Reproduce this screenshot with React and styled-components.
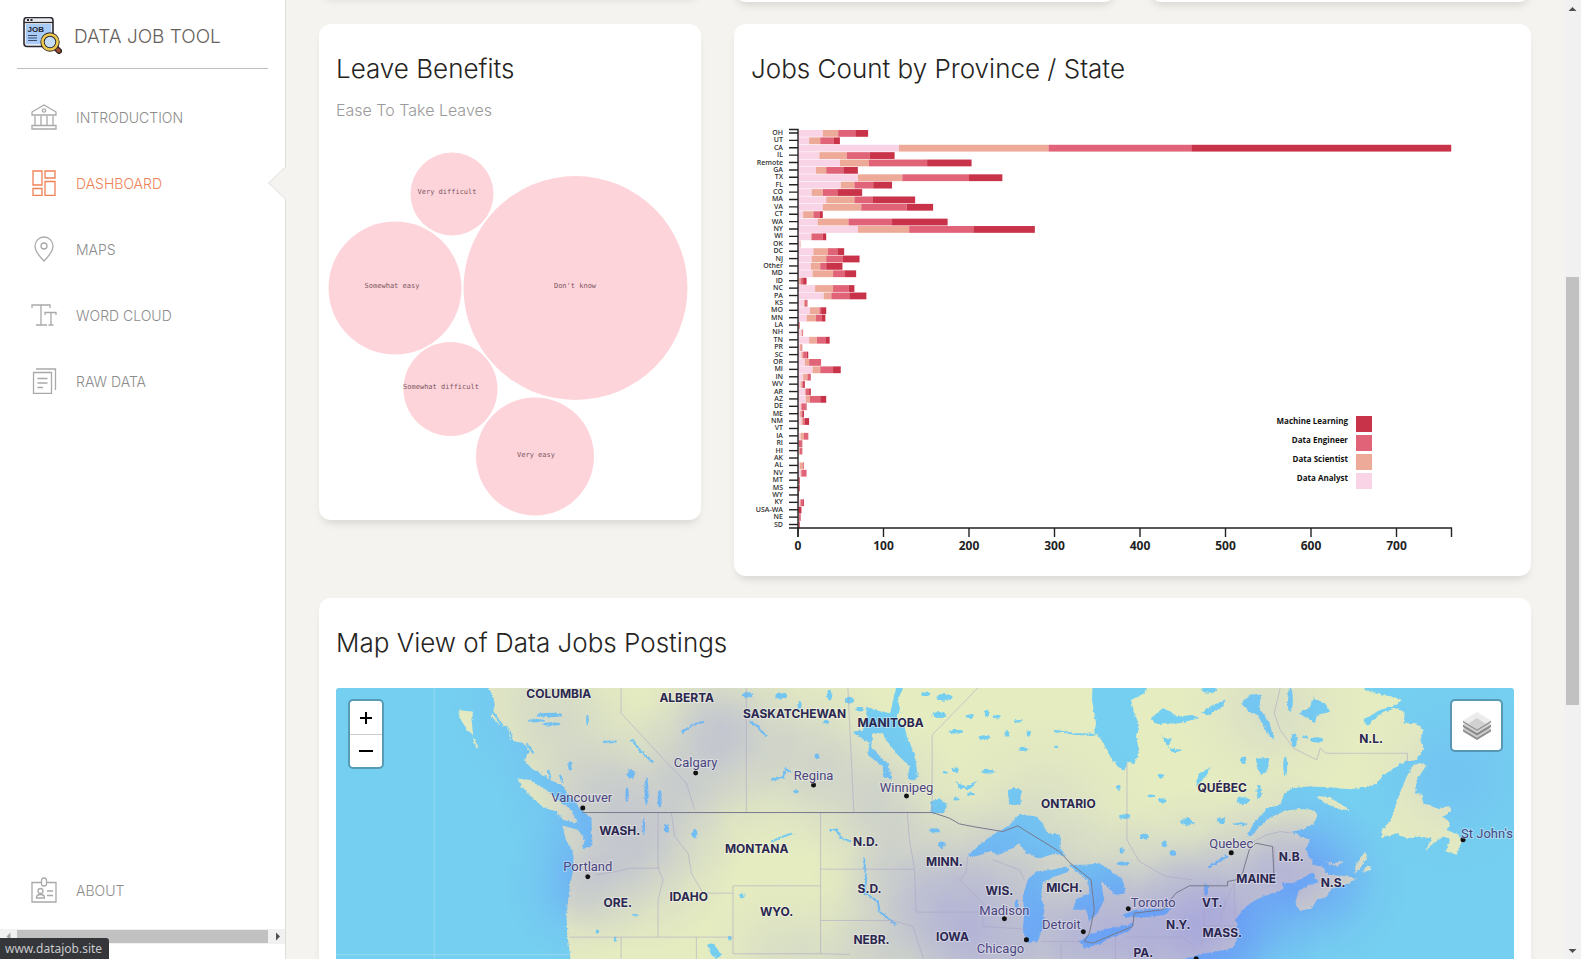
import React from "react";
import styled, { createGlobalStyle, css } from "styled-components";

const GlobalStyle = createGlobalStyle`
  *, *::before, *::after { box-sizing: border-box; }
  html, body { margin: 0; height: 100%; overflow: hidden; }
  body { background: #f4f3ef; font-family: Inter, "Open Sans", sans-serif; font-weight: 300; color: #252422; }
`;

/* ---------- layout ---------- */

const Page = styled.div`
  display: flex;
  height: 100vh;
  overflow: hidden;
`;

const Sidebar = styled.aside`
  flex: 0 0 286px;
  display: flex;
  flex-direction: column;
  background: #fff;
  border-right: 1px solid #ddd;
`;

const Brand = styled.a`
  display: flex;
  align-items: center;
  gap: 12px;
  height: 69px;
  margin: 0 17px;
  padding: 5px 5px 0;
  border-bottom: 1px solid #bdbdbd;
  color: #66615b;
  font-size: 19px;
  text-decoration: none;
`;

const Nav = styled.nav`
  display: flex;
  flex: 1;
  flex-direction: column;
  padding: 15px 0 6px;
`;

const NavLink = styled.a`
  position: relative;
  display: flex;
  align-items: center;
  gap: 19px;
  height: 66px;
  padding-left: 31px;
  color: ${(p) => (p.$active ? "#ef8157" : "#8c8c8c")};
  font-size: 14px;
  text-decoration: none;

  svg {
    width: 26px;
    height: 26px;
    fill: none;
    stroke: ${(p) => (p.$active ? "#ef8157" : "#a9a9a9")};
    stroke-width: 1.3;
  }

  ${(p) => p.$bottom && css`margin-top: auto;`}

  ${(p) =>
    p.$active &&
    css`
      &::after {
        content: "";
        position: absolute;
        top: 17px;
        right: -1px;
        width: 17px;
        height: 32px;
        background: #f4f3ef;
        clip-path: polygon(100% 0, 0 50%, 100% 100%);
      }
      &::before {
        content: "";
        position: absolute;
        top: 16px;
        right: -1px;
        width: 18px;
        height: 34px;
        background: #ddd;
        clip-path: polygon(100% 0, 0 50%, 100% 100%);
      }
    `}
`;

const SideScroll = styled.div`
  display: flex;
  align-items: center;
  height: 15px;
  margin-bottom: 15px;
  background: #f1f1f1;
`;

const ScrollThumb = styled.div`
  flex: ${(p) => p.$grow};
  align-self: stretch;
  margin: ${(p) => (p.$vertical ? "0 2px" : "1px 0")};
  background: #c1c1c1;
`;

const ScrollArrow = styled.svg`
  flex: 0 0 17px;
  width: 17px;
  height: 17px;
  fill: #505050;
`;

const Main = styled.main`
  flex: 1;
  min-width: 0;
  overflow: hidden;
`;

const Scrolled = styled.div`
  display: grid;
  grid-template-columns: repeat(3, 1fr);
  align-items: start;
  gap: 22px 33px;
  margin-top: -98px;
  padding: 0 33px 22px;
`;

const Card = styled.section`
  grid-column: span ${(p) => p.$span || 1};
  overflow: hidden;
  background: #fff;
  border-radius: 12px;
  box-shadow: 0 6px 10px -4px rgba(0, 0, 0, 0.15);
  ${(p) => p.$stub && css`height: ${p.$stub}px;`}
`;

const CardHead = styled.header`
  padding: 29px 17px ${(p) => (p.$tight ? "18px" : "29px")};
`;

const Title = styled.h2`
  margin: 0;
  font-size: 26px;
  line-height: 32px;
  font-weight: 300;
`;

const Subtitle = styled.p`
  margin: 13px 0 0;
  color: #9a9a9a;
  font-size: 16px;
  line-height: 24px;
`;

const Plot = styled.svg`
  display: block;
  width: 100%;
`;

const PageScroll = styled.div`
  flex: 0 0 17px;
  display: flex;
  flex-direction: column;
  background: #f1f1f1;
`;

const ScrollGap = styled.div`
  flex: ${(p) => p.$grow};
`;

const StatusTip = styled.div`
  position: fixed;
  left: 0;
  bottom: 0;
  padding: 0 7px 0 5px;
  border-top-right-radius: 3px;
  background: #35363a;
  color: #c8cacd;
  font: 400 12px/21px "Noto Sans", sans-serif;
`;

/* ---------- icons ---------- */

const icons = {
  intro: (
    <>
      <path d="M1 11V8L13 1l12 7v3z" />
      <circle cx="13" cy="6.5" r="1.7" />
      <path d="M4 12v9M10 12v9M16 12v9M22 12v9M1 25v-3.5h24V25z" />
    </>
  ),
  dashboard: (
    <path d="M2 1h9v14H2zM14 1h10v7H14zM2 18.500h9V25.500H2zM14 11.500h10v14H14z" />
  ),
  maps: (
    <>
      <path d="M13 25C7 19 4 14.500 4 10a9 9 0 0 1 18 0c0 4.500-3 9-9 15z" />
      <circle cx="13" cy="10" r="3" />
    </>
  ),
  words: (
    <path d="M1 6V3h18v3M10 3v20M5 23h11M14 13v-2.500h11V13M20 10.500V23M17.500 23h5" />
  ),
  raw: (
    <path d="M2.500 4.500h18v21h-18zM5 1h19.500v21M6.500 10.500h10M6.500 15h10M6.500 19.500h5.500" />
  ),
  about: (
    <>
      <path d="M10.500 5.500H1V25h24V5.500h-9.500" />
      <rect x="10.500" y="1" width="5" height="8" rx="2.300" />
      <circle cx="9.500" cy="14" r="2.500" />
      <path d="M5.500 21c0-3 2-3.500 4-3.500s4 .5 4 3.500zM16 14h6M16 18.500h6" />
    </>
  ),
};

const NavIcon = ({ name }) => (
  <svg viewBox="0 0 26 26" aria-hidden="true">
    {icons[name]}
  </svg>
);

const LogoSvg = styled.svg`
  width: 40px;
  height: 40px;
`;

const Logo = () => (
  <LogoSvg viewBox="0 1 40 40" aria-hidden="true">
    <rect x="2" y="1.500" width="29" height="29" rx="3" fill="#e9eaf0" stroke="#2b2a33" strokeWidth="1.600" />
    <path d="M2 6.500h29" stroke="#2b2a33" strokeWidth="1.200" />
    <path d="M5 4h2M8.500 4h2" stroke="#2b2a33" strokeWidth="2.200" />
    <rect x="4" y="8" width="25" height="20" fill="#a9cbf8" />
    <text x="5.500" y="16" fontFamily="Liberation Sans, sans-serif" fontWeight="700" fontSize="8" fill="#22222c">JOB</text>
    <path d="M6 19.500h9M6 22h9M6 24.500h9" stroke="#3b4b68" strokeWidth="1.200" />
    <path d="m33 31 4 4" stroke="#2b1d18" strokeWidth="6" strokeLinecap="round" />
    <path d="m33 31 4 4" stroke="#9b4f35" strokeWidth="3.400" strokeLinecap="round" />
    <circle cx="28" cy="26" r="7.500" fill="#c5dcf9" stroke="#2b2a33" strokeWidth="4.400" />
    <circle cx="28" cy="26" r="7.500" fill="none" stroke="#efc94c" strokeWidth="2.600" />
  </LogoSvg>
);

/* ---------- bubble chart ---------- */

const bubbles = [
  { label: "Very difficult", x: 133, y: 54, r: 41.5, tx: 128 },
  { label: "Don't know", x: 256.5, y: 148, r: 112, tx: 256 },
  { label: "Somewhat easy", x: 76, y: 148, r: 66.5, tx: 73 },
  { label: "Somewhat difficult", x: 131.5, y: 249, r: 47, tx: 122 },
  { label: "Very easy", x: 216, y: 316.5, r: 59, tx: 217 },
];

const BubbleText = styled.text`
  font: 400 7px "DejaVu Sans Mono", monospace;
  text-anchor: middle;
  fill: #7a5660;
`;

const BubbleChart = () => (
  <Plot viewBox="0 0 382 380" role="img" aria-label="Ease to take leaves">
    {bubbles.map((b) => (
      <g key={b.label}>
        <circle cx={b.x} cy={b.y} r={b.r} fill="#fed4db" />
        <BubbleText x={b.tx} y={b.y}>{b.label}</BubbleText>
      </g>
    ))}
  </Plot>
);

/* ---------- stacked bar chart ---------- */

/* cumulative totals: analyst, scientist, engineer, machine learning */
const states = [
  ["OH", 29, 47, 67, 82], ["UT", 13, 26, 42, 49], ["CA", 118, 293, 460, 764],
  ["IL", 25, 57, 84, 113], ["Remote", 49, 83, 151, 203], ["GA", 21, 33, 53, 70],
  ["TX", 70, 122, 200, 239], ["FL", 50, 66, 88, 110], ["CO", 16, 29, 46, 75],
  ["MA", 33, 66, 87, 137], ["VA", 29, 74, 127, 158], ["CT", 6, 18, 25, 29],
  ["WA", 23, 59, 110, 175], ["NY", 70, 130, 205, 277], ["WI", 15, 16, 29, 33],
  ["OK", 2, 3, 3, 3], ["DC", 18, 35, 46, 54], ["NJ", 16, 33, 52, 72],
  ["Other", 15, 26, 33, 52], ["MD", 17, 41, 55, 68], ["ID", 1, 3, 6, 10],
  ["NC", 20, 41, 59, 66], ["PA", 30, 39, 60, 80], ["KS", 7, 8, 10, 11],
  ["MO", 14, 25, 27, 33], ["MN", 10, 21, 28, 32], ["LA", 0, 1, 2, 2],
  ["NH", 4, 5, 6, 6], ["TN", 13, 22, 32, 37], ["PR", 2, 4, 5, 5],
  ["SC", 4, 6, 10, 12], ["OR", 8, 13, 27, 27], ["MI", 17, 26, 41, 50],
  ["IN", 6, 11, 15, 15], ["WV", 3, 5, 6, 8], ["AR", 8, 9, 13, 15],
  ["AZ", 9, 14, 26, 33], ["DE", 3, 4, 9, 10], ["ME", 2, 4, 5, 7],
  ["NM", 4, 6, 8, 13], ["VT", 0, 1, 1, 1], ["IA", 3, 7, 11, 12],
  ["RI", 1, 1, 4, 5], ["HI", 1, 2, 4, 5], ["AK", 0, 0, 0, 0],
  ["AL", 2, 6, 7, 7], ["NV", 3, 4, 10, 10], ["MT", 0, 1, 1, 2],
  ["MS", 0, 0, 1, 2], ["WY", 0, 0, 1, 1], ["KY", 2, 3, 6, 7],
  ["USA-WA", 0, 0, 1, 4], ["NE", 1, 1, 2, 3], ["SD", 0, 1, 1, 2],
];

const series = [
  { name: "Data Analyst", color: "#f9d4e6" },
  { name: "Data Scientist", color: "#eeaa99" },
  { name: "Data Engineer", color: "#e06377" },
  { name: "Machine Learning", color: "#c83349" },
];

const AxisLine = styled.path`
  fill: none;
  stroke: #222;
  stroke-width: 1.4;
`;

const StateText = styled.text`
  font: 600 7px "Open Sans", sans-serif;
  text-anchor: end;
  fill: #333;
`;

const TickText = styled.text`
  font: 700 12px "Noto Sans", sans-serif;
  text-anchor: middle;
  fill: #222;
`;

const LegendText = styled.text`
  font: 700 8px "Open Sans", sans-serif;
  text-anchor: end;
  fill: #111;
`;

const ORIGIN = 64;
const UNIT = 0.855;
const ROW = 7.387;
const FIRST = 21;

const BarChart = () => (
  <Plot viewBox="0 2 797 462" role="img" aria-label="Jobs count by province or state">
    {states.map(([name, ...totals], i) => {
      const cy = FIRST + i * ROW;
      return (
        <g key={name}>
          {totals.map((end, s) => {
            const start = s ? totals[s - 1] : 0;
            return (
              <rect key={s} x={ORIGIN + start * UNIT} y={cy - 3} width={(end - start) * UNIT} height={6.8} fill={series[s].color} />
            );
          })}
          <AxisLine d={`M${ORIGIN - 9} ${cy}h9`} />
          <StateText x={ORIGIN - 15} y={cy + 2}>{name}</StateText>
        </g>
      );
    })}
    <AxisLine d="M55 17.500h9V416h-9" />
    <AxisLine d="M64 425V416H717.500V425" />
    {[0, 100, 200, 300, 400, 500, 600, 700].map((v) => (
      <g key={v}>
        <AxisLine d={`M${ORIGIN + v * UNIT} 416v9`} />
        <TickText x={ORIGIN + v * UNIT} y={438}>{v}</TickText>
      </g>
    ))}
    {[...series].reverse().map((s, i) => (
      <g key={s.name}>
        <LegendText x={614} y={312 + i * 19}>{s.name}</LegendText>
        <rect x={622} y={304 + i * 19} width={16} height={16} fill={s.color} />
      </g>
    ))}
  </Plot>
);

/* ---------- map ---------- */

/* The outlines are kept at three units to a pixel, sheet by sheet from west to east. */
const sheet = (dx, points) =>
  points
    .split(" ")
    .map((p) => {
      const [x, y] = p.split(",").map(Number);
      return `${x + dx},${y}`;
    })
    .join(" ");
const W = 0;
const P = 960;
const L = 1890;
const E = 2763;

const mainland = [
  sheet(W, "470,10 490,50 495,75 485,110 510,135 535,140 540,180 580,190 600,215 582,240 605,265 640,285 680,310 700,320 715,345 735,365 748,385 765,398 785,415 788,500 758,505 765,480 745,450 698,437 708,480 730,515 733,560 720,620 710,700 712,760 722,837 722,1300"),
  sheet(L, "400,1300 520,960 600,860 720,824 820,806 842,760 828,720 860,680 910,648"),
  sheet(E, "0,668 40,650 100,628 95,608 130,610 165,590 195,572 185,540 165,510 180,480 150,470 125,455 160,450 190,430 203,405 190,390 150,387 110,392 60,412 30,437 5,468 -10,470 10,430 50,385 90,375 100,345 125,325 175,320 240,322 300,328 350,322 380,310 400,285 440,260 470,242 500,240 522,205 510,185 520,150 500,130 460,128 465,100 440,85 400,95 350,137 340,120 390,90 440,74 455,60 430,50 400,45 340,28 370,10"),
].join(" ");

const islands = [
  sheet(W, "562,295 600,300 650,330 690,365 722,387 745,430 700,420 680,395 640,382 600,345 575,320"),
  sheet(W, "385,90 432,95 425,120 430,165 412,150 390,115"),
  sheet(W, "428,170 436,178 446,205 436,198"),
  sheet(W, "500,75 508,90 500,115 490,100"),
  sheet(E, "190,556 215,560 235,585 300,590 318,600 280,618 245,625 230,650 200,660 185,685 150,693 135,668 145,635 175,615 205,608 190,580"),
  sheet(E, "510,250 530,255 510,285 500,300 495,340 515,345 520,370 560,385 600,378 605,395 580,410 600,430 590,450 625,465 635,485 620,525 588,515 600,480 580,470 550,490 525,515 545,475 500,470 470,475 440,460 392,475 395,450 420,425 430,400 445,350 470,290 490,255"),
  sheet(E, "198,348 240,352 300,390 265,388 225,370"),
  sheet(E, "225,545 250,550 283,543 260,559 235,553"),
  sheet(E, "345,515 350,535 330,565 312,584 318,555"),
  sheet(E, "335,580 350,556 367,567"),
];

const lakes = [
  sheet(L, "400,10 398,60 410,130 405,160 430,185 450,225 475,260 495,272 505,245 525,250 540,215 530,170 540,140 525,100 515,60 555,40 570,10"),
  sheet(L, "25,530 60,495 100,465 150,435 180,402 230,410 250,430 265,460 305,465 300,500 320,530 290,520 240,535 200,520 180,490 150,510 120,525 90,515"),
  sheet(L, "320,560 280,570 230,575 205,600 190,650 195,700 190,750 205,790 235,785 250,740 255,690 245,650 250,610 285,590 330,575"),
  sheet(L, "330,555 380,555 420,550 450,570 490,600 500,640 470,645 425,605 435,660 415,700 390,722 380,690 340,690 350,660 390,640 385,600 350,575"),
  sheet(L, "360,785 390,765 430,750 480,740 525,730 510,755 460,770 420,795 375,805"),
  sheet(L, "490,705 530,690 590,690 635,685 620,705 560,712 500,712"),
  sheet(L, "145,335 165,322 185,330 183,375 150,375"),
  sheet(P, "650,80 675,90 722,100 740,20 762,20 745,60 752,90 740,115 765,140 775,180 795,220 805,290 790,305 775,295 780,260 740,220 710,180 700,160 670,160 665,200 690,230 715,250 727,300 700,290 700,260 655,225 660,190 620,165 610,155 640,150 650,120"),
  sheet(P, "845,365 870,355 895,375 880,400 845,400"),
  sheet(P, "172,795 190,790 215,825 200,837 185,825"),
  sheet(P, "955,525 995,500 1010,520 975,530"),
  sheet(P, "920,305 950,320 985,300 960,328 930,325"),
  sheet(L, "575,115 610,85 635,95 650,110 700,105 720,115 660,130 590,132"),
  sheet(L, "725,100 760,75 800,60 790,80 750,105"),
  sheet(L, "845,70 880,40 905,45 900,85 930,125 945,180 925,160 895,105 870,95"),
  sheet(L, "605,165 620,175 638,175 625,205 672,210 640,220"),
  sheet(L, "710,320 720,280 755,262 740,290"),
  sheet(L, "890,235 930,235 925,275 905,285 895,265"),
  sheet(L, "660,425 685,410 705,430 680,438"),
  sheet(E, "145,100 180,80 190,55 225,70 240,95 200,105 195,130 165,110"),
  sheet(L, "745,560 800,525 805,532 750,566"),
];

/* x, y, rx, ry */
const ponds = [
  [P + 295, 45, 16, 8], [P + 395, 48, 18, 9], [P + 540, 45, 8, 16], [P + 600, 60, 14, 10], [P + 630, 88, 12, 8],
  [P + 885, 52, 24, 10], [P + 828, 42, 14, 6], [P + 870, 105, 22, 9], [P + 920, 155, 22, 6], [P + 962, 108, 10, 6],
  [P + 502, 229, 7, 8], [P + 440, 335, 8, 5], [P + 135, 462, 8, 14], [P + 50, 445, 8, 12], [P + 30, 355, 6, 28],
  [P + 855, 452, 16, 8], [P + 876, 495, 10, 10], [P + 918, 270, 10, 7], [P + 888, 277, 8, 4], [P + 277, 648, 8, 7],
  [P + 240, 775, 5, 7], [P + 965, 342, 12, 4], [P + 920, 357, 8, 5], [P + 450, 75, 6, 12], [P + 530, 125, 9, 5],
  [L + 30, 108, 12, 4], [L + 82, 100, 6, 10], [L + 112, 110, 12, 6], [L + 175, 124, 12, 4], [L + 75, 172, 18, 6],
  [L + 143, 162, 8, 8], [L + 208, 160, 6, 11], [L + 192, 208, 12, 5], [L + 290, 202, 6, 5], [L + 85, 275, 20, 6],
  [L + 605, 288, 10, 6], [L + 478, 322, 6, 8], [L + 610, 362, 12, 7], [L + 575, 348, 10, 4], [L + 495, 410, 18, 7],
  [L + 785, 422, 12, 9], [L + 555, 470, 14, 8], [L + 615, 492, 8, 10], [L + 642, 520, 9, 8], [L + 487, 512, 6, 10],
  [L + 490, 551, 18, 6], [L + 853, 240, 8, 12], [L + 740, 630, 6, 18], [L + 172, 672, 6, 14], [L + 850, 362, 20, 10],
  [L + 900, 335, 8, 20], [L + 845, 432, 24, 4], [L + 750, 30, 24, 8],
  [E + 105, 260, 6, 30], [E + 120, 60, 8, 36], [E + 132, 180, 8, 22], [E + 200, 180, 20, 8], [E + 165, 172, 8, 6],
  [W + 660, 105, 40, 7], [W + 620, 122, 26, 5], [W + 665, 132, 28, 5], [W + 840, 186, 22, 4], [W + 720, 258, 5, 14],
  [W + 904, 282, 12, 12], [W + 892, 345, 5, 24], [W + 950, 335, 6, 40], [W + 773, 120, 4, 16], [W + 918, 706, 9, 4],
  [W + 857, 778, 5, 8], [W + 802, 755, 6, 6], [W + 942, 438, 4, 26],
];

const rivers = [
  sheet(P, "643,533 650,600 645,640 685,665 690,695 740,735"),
  sheet(P, "365,300 400,292 408,268 422,275"),
  sheet(P, "365,485 400,470 430,460"),
  sheet(P, "540,450 560,450 575,475 605,485"),
  sheet(L, "285,152 350,162 405,165"),
  sheet(W, "905,178 935,215 970,248"),
  sheet(L, "525,695 610,690"),
  sheet(P, "95,158 130,134 160,126"),
  sheet(P, "300,125 325,140 350,170"),
  sheet(W, "485,90 505,120 520,145"),
  sheet(W, "540,150 548,190"),
  sheet(W, "590,190 612,222"),
  sheet(W, "655,268 662,295"),
  sheet(W, "690,285 700,312"),
];

const stateLines = [
  sheet(P, "290,24 290,398"), sheet(P, "595,24 613,398"), sheet(P, "848,398 848,165 985,24"),
  sheet(P, "25,398 25,565 40,600 25,660 25,772"), sheet(P, "65,398 75,470 115,520 125,580 160,640 250,640"),
  sheet(P, "250,618 513,618 513,822 250,822 250,618"), sheet(P, "513,398 513,618"), sheet(P, "513,568 795,568"),
  sheet(P, "513,722 730,722 790,740 822,837"), sheet(P, "773,398 780,480 795,568 800,697 1000,697"),
  sheet(P, "-240,772 250,772"), sheet(P, "140,772 140,1000"), sheet(W, "874,772 874,1000"),
  sheet(W, "800,585 860,575 900,565 990,565"), sheet(W, "874,24 874,100 930,160 990,225 1070,310 1095,390"),
  sheet(L, "503,250 503,480 540,545 620,590 700,600"), sheet(L, "25,530 20,580 0,600 40,640 70,670 70,740 200,748"),
  sheet(L, "100,540 180,570 195,600"), sheet(L, "245,785 360,785"), sheet(L, "305,790 305,1000"),
  sheet(L, "468,770 468,1000"), sheet(L, "495,772 670,772 705,800"), sheet(L, "735,618 735,765 725,800"),
  sheet(L, "825,610 800,660 780,735"), sheet(L, "825,610 828,730"), sheet(L, "735,738 828,738"),
  sheet(E, "228,220 472,220 472,250"), sheet(E, "90,24 72,100 90,150 130,205 200,240 210,205 228,220"),
  sheet(E, "0,490 50,465 90,455 125,460"), sheet(E, "72,500 72,605"), sheet(P, "513,822 600,824"),
];

const border = [
  sheet(P, "-202,398 850,398 900,415 930,432"),
  sheet(L, "0,432 40,440 130,455 175,438 300,515 335,552 395,600 405,690 390,760 375,785 400,790 520,740 525,700 610,690 650,640 690,618 805,618 805,605 830,600 850,580 870,510 890,490 940,500 945,600"),
].join(" ");

/* x, y, radius, opacity */
const heat = [
  [800, 330, 300, 0.4], [930, 520, 300, 0.45], [750, 620, 230, 0.4], [650, 80, 300, 0.25], [1170, 140, 260, 0.5],
  [1080, 320, 280, 0.35], [1430, 240, 300, 0.35], [1660, 370, 260, 0.35], [1850, 680, 340, 0.6], [1680, 600, 240, 0.25],
  [1940, 830, 320, 0.5], [2140, 430, 340, 0.2], [2330, 720, 340, 0.55], [2180, 800, 320, 0.45], [2600, 640, 320, 0.5],
  [2680, 760, 300, 0.65], [2870, 560, 280, 0.6], [2980, 610, 260, 0.4], [3370, 290, 300, 0.2], [1600, 840, 240, 0.3],
  [2830, 90, 280, 0.2], [1360, 820, 240, 0.2], [2480, 860, 340, 0.5], [2000, 550, 260, 0.25],
];

const regions = [
  ["COLUMBIA", 559, 694], ["ALBERTA", 687, 698], ["SASKATCHEWAN", 795, 714], ["MANITOBA", 891, 723],
  ["N.L.", 1372, 739], ["QUÉBEC", 1223, 788], ["ONTARIO", 1069, 804], ["WASH.", 620, 831], ["MONTANA", 757, 849],
  ["N.D.", 866, 842], ["MINN.", 945, 862], ["S.D.", 870, 889], ["IDAHO", 689, 897], ["ORE.", 618, 903],
  ["WYO.", 777, 912], ["NEBR.", 872, 940], ["IOWA", 953, 937], ["WIS.", 1000, 891], ["MICH.", 1065, 888],
  ["VT.", 1213, 903], ["N.Y.", 1179, 925], ["MASS.", 1223, 933], ["PA.", 1144, 953], ["MAINE", 1257, 879],
  ["N.B.", 1292, 857], ["N.S.", 1334, 883],
];

/* name, label x, label y, dot x, dot y */
const cities = [
  ["Vancouver", 582, 797, 583, 808], ["Portland", 588, 866, 588, 877], ["Calgary", 696, 762, 696, 773],
  ["Regina", 814, 775, 814, 785], ["Winnipeg", 907, 787, 907, 796], ["Madison", 1005, 910, 1005, 919],
  ["Detroit", 1062, 924, 1084, 932], ["Chicago", 1001, 948, 1027, 940], ["Toronto", 1154, 902, 1129, 909],
  ["Quebec", 1232, 843, 1232, 853], ["St John's", 1488, 833, 1464, 840],
];

const MapFrame = styled.div`
  position: relative;
  margin: 0 17px 17px;
  border-radius: 3px;
  overflow: hidden;
  background: #75cff0;
`;

const RegionText = styled.text`
  font: 700 12px Inter, sans-serif;
  text-anchor: middle;
  fill: #2b2750;
  stroke: rgba(255, 255, 255, 0.35);
  stroke-width: 2;
  paint-order: stroke;
`;

const CityText = styled(RegionText)`
  font: 400 13px Roboto, sans-serif;
  fill: #4b4580;
`;

const mapControl = css`
  position: absolute;
  top: 11px;
  border: 2px solid rgba(0, 0, 0, 0.25);
  border-radius: 5px;
  background: #fff;
  background-clip: padding-box;
`;

const ZoomBar = styled.div`
  ${mapControl}
  left: 12px;
  display: flex;
  flex-direction: column;
`;

const ZoomButton = styled.button`
  display: grid;
  place-items: center;
  width: 32px;
  height: 33px;
  padding: 0;
  border: 0;
  background: none;
  & + & {
    border-top: 1px solid #ccc;
  }
`;

const LayersButton = styled.button`
  ${mapControl}
  right: 11px;
  display: grid;
  place-items: center;
  width: 53px;
  height: 53px;
  padding: 0;
`;

const MapView = () => (
  <MapFrame>
    <Plot viewBox="336 688 1179 400" role="img" aria-label="Heat map of job postings in North America">
      <defs>
        <filter id="coast" x="-5%" y="-5%" width="110%" height="110%">
          <feTurbulence type="fractalNoise" baseFrequency="0.11" numOctaves="3" seed="4" />
          <feDisplacementMap in="SourceGraphic" scale="10" xChannelSelector="R" yChannelSelector="G" />
        </filter>
        <radialGradient id="heat">
          <stop offset="0" stopColor="#5a50ff" stopOpacity="0.42" />
          <stop offset="0.250" stopColor="#5a50ff" stopOpacity="0.35" />
          <stop offset="0.600" stopColor="#5a50ff" stopOpacity="0.13" />
          <stop offset="1" stopColor="#5a50ff" stopOpacity="0" />
        </radialGradient>
      </defs>
      <g transform="translate(330 680) scale(0.33333)">
        <g filter="url(#coast)">
          <polygon points={mainland} fill="#e5ecc0" />
          {islands.map((p) => <polygon key={p} points={p} fill="#e5ecc0" />)}
          {lakes.map((p) => <polygon key={p} points={p} fill="#75cff0" />)}
          {ponds.map(([x, y, rx, ry]) => <ellipse key={`${x}-${y}`} cx={x} cy={y} rx={rx} ry={ry} fill="#75cff0" />)}
          {rivers.map((p) => <polyline key={p} points={p} fill="none" stroke="#75cff0" strokeWidth="6" />)}
        </g>
        {heat.map(([x, y, r, o]) => <circle key={`${x}-${y}`} cx={x} cy={y} r={r} opacity={o} fill="url(#heat)" />)}
        {stateLines.map((p) => <polyline key={p} points={p} fill="none" stroke="#a79fc4" strokeOpacity="0.600" strokeWidth="2.500" />)}
        <polyline points={border} fill="none" stroke="#77788c" strokeWidth="3" />
        <path d="M313 24V1300M18 825H720" stroke="#fff" strokeOpacity="0.350" strokeWidth="2" />
      </g>
      {cities.map(([name, x, y, dx, dy]) => (
        <g key={name}>
          <circle cx={dx} cy={dy} r="2.500" fill="#111" />
          <CityText x={x} y={y + 5}>{name}</CityText>
        </g>
      ))}
      <circle cx="1197" cy="959" r="2.500" fill="#111" />
      {regions.map(([name, x, y]) => <RegionText key={name} x={x} y={y + 4}>{name}</RegionText>)}
    </Plot>
    <ZoomBar>
      <ZoomButton aria-label="Zoom in">
        <svg width="14" height="14"><path d="M7 1v12M1 7h12" stroke="#000" strokeWidth="2" /></svg>
      </ZoomButton>
      <ZoomButton aria-label="Zoom out">
        <svg width="14" height="14"><path d="M0 7h14" stroke="#000" strokeWidth="2" /></svg>
      </ZoomButton>
    </ZoomBar>
    <LayersButton aria-label="Layers">
      <svg width="30" height="30" viewBox="0 0 30 30">
        <path d="m1 18 14 8.500L29 18v2.500L15 29 1 20.500z" fill="#8f8f8f" />
        <path d="m1 18 14-8 14 8-14 8.500z" fill="#c9c9c9" />
        <path d="m1 13.500 14 8.500 14-8.500V16l-14 8.500L1 16z" fill="#8a8a8a" />
        <path d="m1 13.500 14-8 14 8L15 22z" fill="#d2d2d2" />
        <path d="m1 9.500 14 8.500 14-8.500v2L15 20 1 11.500z" fill="#9a9a9a" />
        <path d="m1 9.500 14-8.500 14 8.500L15 18z" fill="#ececec" />
        <path d="m6.500 12.500 8.500-5.500 8.500 5.500L15 18z" fill="#d0d0d0" />
      </svg>
    </LayersButton>
  </MapFrame>
);

/* ---------- page ---------- */

const links = [
  ["intro", "INTRODUCTION"],
  ["dashboard", "DASHBOARD"],
  ["maps", "MAPS"],
  ["words", "WORD CLOUD"],
  ["raw", "RAW DATA"],
];

export default function App() {
  return (
    <>
      <GlobalStyle />
      <Page>
        <Sidebar>
          <Brand href="#home"><Logo />DATA JOB TOOL</Brand>
          <Nav>
            {links.map(([icon, label]) => (
              <NavLink key={icon} href={`#${icon}`} $active={icon === "dashboard"}>
                <NavIcon name={icon} />{label}
              </NavLink>
            ))}
            <NavLink href="#about" $bottom><NavIcon name="about" />ABOUT</NavLink>
          </Nav>
          <SideScroll>
            <ScrollArrow viewBox="0 0 17 17"><path d="M10.500 4.500v8l-4-4z" fill="#a3a3a3" /></ScrollArrow>
            <ScrollThumb $grow={1} />
            <ScrollArrow viewBox="0 0 17 17"><path d="M8 4.500v8l4-4z" /></ScrollArrow>
          </SideScroll>
        </Sidebar>
        <Main>
          <Scrolled>
            <Card $stub={94} />
            <Card $stub={100} />
            <Card $stub={100} />
            <Card>
              <CardHead $tight>
                <Title>Leave Benefits</Title>
                <Subtitle>Ease To Take Leaves</Subtitle>
              </CardHead>
              <BubbleChart />
            </Card>
            <Card $span={2}>
              <CardHead>
                <Title>Jobs Count by Province / State</Title>
              </CardHead>
              <BarChart />
            </Card>
            <Card $span={3}>
              <CardHead>
                <Title>Map View of Data Jobs Postings</Title>
              </CardHead>
              <MapView />
            </Card>
          </Scrolled>
        </Main>
        <PageScroll>
          <ScrollArrow viewBox="0 0 17 17"><path d="M4.500 11h8l-4-4z" /></ScrollArrow>
          <ScrollGap $grow={260} />
          <ScrollThumb $grow={428} $vertical />
          <ScrollGap $grow={237} />
          <ScrollArrow viewBox="0 0 17 17"><path d="M4.500 7h8l-4 4z" /></ScrollArrow>
        </PageScroll>
      </Page>
      <StatusTip>www.datajob.site</StatusTip>
    </>
  );
}
